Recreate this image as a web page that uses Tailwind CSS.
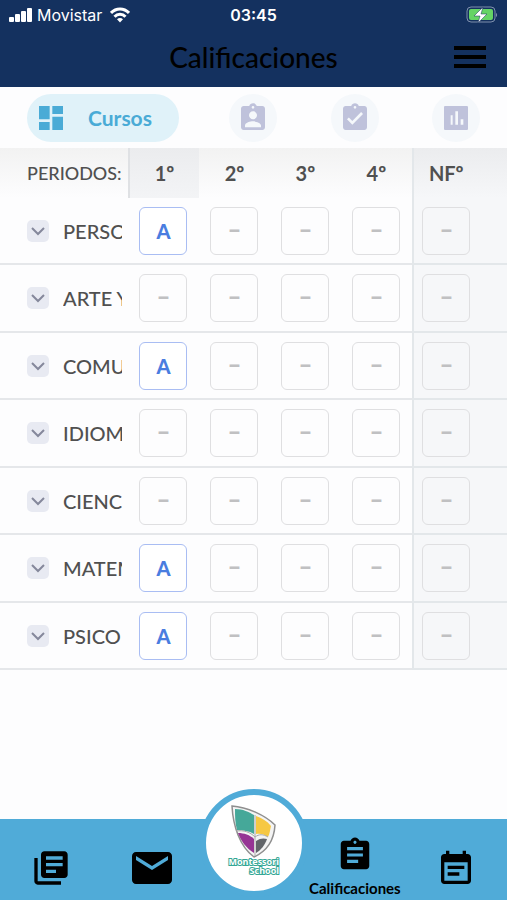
<!DOCTYPE html>
<html lang="es">
    <head>
        <meta charset="utf-8">
        <meta name="viewport" content="width=device-width, initial-scale=1">

        <title>Calificaciones</title>

        <script src="https://cdn.jsdelivr.net/npm/@tailwindcss/browser@4"></script>
    </head>

    <body class="flex flex-col min-h-screen bg-[#fdfdfe] font-['Lato',sans-serif] text-[#505050]">
        <header class="bg-[#14315f] h-[87px]" role="banner">
            <div class="grid grid-cols-3 items-center h-[30px] px-[9px] text-white font-['Inter',sans-serif] text-base">
                <div class="flex items-center gap-1">
                    <svg class="w-6 h-4 fill-current" viewBox="0 0 24 16">
                        <rect x="0" y="10" width="5" height="5" rx="1"/>
                        <rect x="6" y="7" width="5" height="8" rx="1"/>
                        <rect x="12" y="4" width="5" height="11" rx="1"/>
                        <rect x="18" y="1" width="5" height="14" rx="1"/>
                    </svg>
                    <span class="mr-1">Movistar</span>
                    <svg class="w-5 h-4" viewBox="0 0 20 16" fill="none" stroke="currentColor" stroke-width="3">
                        <path d="M1 6c5-5.300 13-5.300 18 0M4.500 9.700c3-3.200 8-3.200 11 0"/>
                        <path d="M10 15.500l-3-3.200c1.700-1.600 4.300-1.600 6 0z" fill="currentColor" stroke="none"/>
                    </svg>
                </div>
                <time class="text-center font-semibold">03:45</time>
                <svg class="justify-self-end w-8 h-[18px]" viewBox="0 0 32 18">
                    <rect x="1" y="1" width="28" height="15" rx="4" fill="none" stroke="#7f90ad"/>
                    <rect x="3" y="3" width="24" height="11" rx="2" fill="#65d465"/>
                    <path d="M30 7v4c1.500-.7 1.500-3.300 0-4z" fill="#7f90ad"/>
                    <path d="M17 1L8 10h6l-2 7 9-9h-6z" fill="#fff" stroke="#14315f" stroke-width=".5"/>
                </svg>
            </div>
            <div class="grid grid-cols-[1fr_auto_1fr] items-center h-[54px] px-[21px]">
                <h1 class="col-start-2 text-[28px] font-medium text-black">Calificaciones</h1>
                <button class="justify-self-end" aria-label="Menú">
                    <svg class="w-8 h-6" viewBox="0 0 32 24">
                        <path d="M0 3h32M0 12h32M0 21h32" stroke="#000" stroke-width="4"/>
                    </svg>
                </button>
            </div>
        </header>

        <nav class="grid grid-cols-5 items-center h-[61px] text-[#bfc2db]">
            <a href="#cursos" class="col-span-2 flex items-center gap-[21px] w-[152px] h-12 ml-[27px] pl-2 rounded-full bg-[#e0f2f9] text-[#4aabd6] text-[21px] font-bold">
                <svg class="w-8 h-8 fill-current" viewBox="0 0 24 24"><path d="M3 13h8V3H3v10zm0 8h8v-6H3v6zm10 0h8V11h-8v10zm0-18v6h8V3h-8z"/></svg>
                Cursos
            </a>
            <a href="#alumno" title="Alumno" class="flex items-center justify-center justify-self-center size-12 rounded-full bg-[#f5f8fb]">
                <svg class="w-8 h-8 fill-current" viewBox="0 0 24 24"><path d="M19 3h-4.180C14.400 1.840 13.300 1 12 1c-1.300 0-2.400.84-2.820 2H5c-1.100 0-2 .9-2 2v14c0 1.100.9 2 2 2h14c1.100 0 2-.9 2-2V5c0-1.100-.9-2-2-2zm-7 0c.55 0 1 .45 1 1s-.45 1-1 1-1-.45-1-1 .45-1 1-1zm0 4c1.660 0 3 1.340 3 3s-1.340 3-3 3-3-1.340-3-3 1.340-3 3-3zm6 12H6v-1.400c0-2 4-3.100 6-3.100s6 1.100 6 3.100V19z"/></svg>
            </a>
            <a href="#tareas" title="Tareas" class="flex items-center justify-center justify-self-center size-12 rounded-full bg-[#f5f8fb]">
                <svg class="w-8 h-8 fill-current" viewBox="0 0 24 24"><path d="M19 3h-4.180C14.400 1.840 13.300 1 12 1c-1.300 0-2.400.84-2.820 2H5c-1.100 0-2 .9-2 2v14c0 1.100.9 2 2 2h14c1.100 0 2-.9 2-2V5c0-1.100-.9-2-2-2zm-7 0c.55 0 1 .45 1 1s-.45 1-1 1-1-.45-1-1 .45-1 1-1zm-2 14l-4-4 1.410-1.410L10 14.170l6.590-6.590L18 9l-8 8z"/></svg>
            </a>
            <a href="#resumen" title="Resumen" class="flex items-center justify-center justify-self-center size-12 rounded-full bg-[#f5f8fb]">
                <svg class="w-8 h-8 fill-current" viewBox="0 0 24 24"><path d="M20 3H4c-.6 0-1 .4-1 1v16c0 .6.4 1 1 1h16c.6 0 1-.4 1-1V4c0-.6-.4-1-1-1zM9.500 17H8v-7h1.500v7zm4 0h-2V7h2v10zm4 0h-2v-4h2v4z"/></svg>
            </a>
        </nav>

        <main role="main" class="mb-20">
            <table class="w-full table-fixed border-separate border-spacing-0">
                <thead>
                    <tr class="h-[50px] bg-linear-to-b from-[#f2f2f2] to-[#fdfdfe] text-xl">
                        <th class="w-[128px] pl-[27px] text-left text-lg font-medium whitespace-nowrap">PERIODOS:</th>
                        <th class="w-[14%] border-l-2 border-[#dfe1e4] bg-linear-to-b from-[#ebecee] to-[#f3f4f6]">1º</th>
                        <th class="w-[14%]">2º</th>
                        <th class="w-[14%]">3º</th>
                        <th class="w-[14%]">4º</th>
                        <th class="pl-[15px] border-l-2 border-[#e3e7ea] bg-linear-to-b from-[#ebecee] to-[#f6f7f9] text-left">NFº</th>
                    </tr>
                </thead>
                <tbody id="js-grades"></tbody>
            </table>
        </main>

        <footer class="mt-auto bg-[#50abd8] h-[81px]" role="contentinfo">
            <nav class="grid grid-cols-5 justify-items-center text-black">
                <a href="#biblioteca" title="Biblioteca" class="mt-[29px]">
                    <svg class="size-10 fill-current" viewBox="0 0 24 24"><path d="M4 6H2v14c0 1.100.9 2 2 2h14v-2H4V6zm16-4H8c-1.100 0-2 .9-2 2v12c0 1.100.9 2 2 2h12c1.100 0 2-.9 2-2V4c0-1.100-.9-2-2-2zm-1 9H9V9h10v2zm-4 4H9v-2h6v2zm4-8H9V5h10v2z"/></svg>
                </a>
                <a href="#mensajes" title="Mensajes" class="mt-[25px]">
                    <svg class="size-12 fill-current" viewBox="0 0 24 24"><path d="M20 4H4c-1.100 0-1.990.9-1.990 2L2 18c0 1.100.9 2 2 2h16c1.100 0 2-.9 2-2V6c0-1.100-.9-2-2-2zm0 4l-8 5-8-5V6l8 5 8-5v2z"/></svg>
                </a>
                <a href="#inicio" title="Inicio" class="-mt-[30px] size-[108px] rounded-full border-6 border-[#50abd8] bg-white">
                    <svg class="size-24" viewBox="0 0 96 96">
                        <path d="M26 11c15 1 33 9 43 19-1 17-10 27-21 32C34 52 27 31 26 11z" fill="#f4f4f4" stroke="#8f8f8f" stroke-width="1.500"/>
                        <path d="M29 14c8 0 14 3 19 6v19c-5-3-11-4-17-4-2-7-2-14-2-21z" fill="#45a899"/>
                        <path d="M50 21c6 2 11 5 15 10-1 4-1 7-3 11-4-3-8-4-12-3z" fill="#f6c843"/>
                        <path d="M32 38c6 0 12 2 16 6v14c-8-5-13-12-16-20z" fill="#963494"/>
                        <path d="M50 58V46c4-3 8-3 11-2-2 6-6 11-11 14z" fill="#626569"/>
                        <path d="M49 20v41M30 36c8-1 14 1 19 6 4-3 8-3 13 0" fill="none" stroke="#a9a9a9" stroke-width="1"/>
                        <g font-family="Open Sans, sans-serif" font-weight="700" font-size="9" text-anchor="end" fill="#fff" stroke="#35a795" stroke-width="2" paint-order="stroke">
                            <text x="73" y="70">Montessori</text>
                            <text x="73" y="79">School</text>
                        </g>
                    </svg>
                </a>
                <a href="#calificaciones" class="flex flex-col items-center mt-[17px] text-[15px] leading-4 font-bold">
                    <svg class="size-[38px] fill-current" viewBox="0 0 24 24"><path d="M19 3h-4.180C14.400 1.840 13.300 1 12 1c-1.300 0-2.400.84-2.820 2H5c-1.100 0-2 .9-2 2v14c0 1.100.9 2 2 2h14c1.100 0 2-.9 2-2V5c0-1.100-.9-2-2-2zm-7 0c.55 0 1 .45 1 1s-.45 1-1 1-1-.45-1-1 .45-1 1-1zm2 14H7v-2h7v2zm3-4H7v-2h10v2zm0-4H7V7h10v2z"/></svg>
                    <span class="mt-[6px]">Calificaciones</span>
                </a>
                <a href="#agenda" title="Agenda" class="mt-[30px]">
                    <svg class="size-10 fill-current" viewBox="0 0 24 24"><path d="M17 10H7v2h10v-2zm2-7h-1V1h-2v2H8V1H6v2H5c-1.110 0-1.990.9-1.990 2L3 19c0 1.100.89 2 2 2h14c1.100 0 2-.9 2-2V5c0-1.100-.9-2-2-2zm0 16H5V8h14v11zm-5-5H7v2h7v-2z"/></svg>
                </a>
            </nav>
        </footer>

        <script>
    const courses = [
        ['PERSO', 'A'],
        ['ARTE Y', '–'],
        ['COMU', 'A'],
        ['IDIOM', '–'],
        ['CIENC', '–'],
        ['MATEM', 'A'],
        ['PSICO', 'A'],
    ];

    const box = (grade) => grade === 'A'
        ? '<button class="block mx-auto size-12 rounded-md border border-[#a9bdf3] bg-white text-xl font-black text-[#4a7de0]">A</button>'
        : '<button class="block mx-auto size-12 pb-1 rounded-md border border-[#dfdfe1] text-2xl font-black text-[#c0c0c2]">–</button>';

    document.getElementById('js-grades').innerHTML = courses.map(([name, grade]) => `
        <tr class="h-[67px] even:h-[68px]">
            <th class="border-b-2 border-[#e5e7ea] pl-[27px] pr-[6px] text-left text-xl font-medium">
                <div class="flex items-center gap-[14px]">
                    <button class="flex items-center justify-center shrink-0 size-[22px] rounded-[5px] bg-[#e8eaf2]" aria-label="Ver detalle">
                        <svg class="w-4 h-4" viewBox="0 0 16 16" fill="none" stroke="#85889b" stroke-width="2"><path d="M2 5l6 6 6-6"/></svg>
                    </button>
                    <span class="overflow-hidden whitespace-nowrap">${name}</span>
                </div>
            </th>
            <td class="border-b-2 border-[#e5e7ea]">${box(grade)}</td>
            <td class="border-b-2 border-[#e5e7ea]">${box('–')}</td>
            <td class="border-b-2 border-[#e5e7ea]">${box('–')}</td>
            <td class="border-b-2 border-[#e5e7ea]">${box('–')}</td>
            <td class="border-b-2 border-l-2 border-[#e3e7ea] bg-[#f6f7f9] pl-2 pr-9">${box('–')}</td>
        </tr>`).join('');
</script>
    </body>
</html>
